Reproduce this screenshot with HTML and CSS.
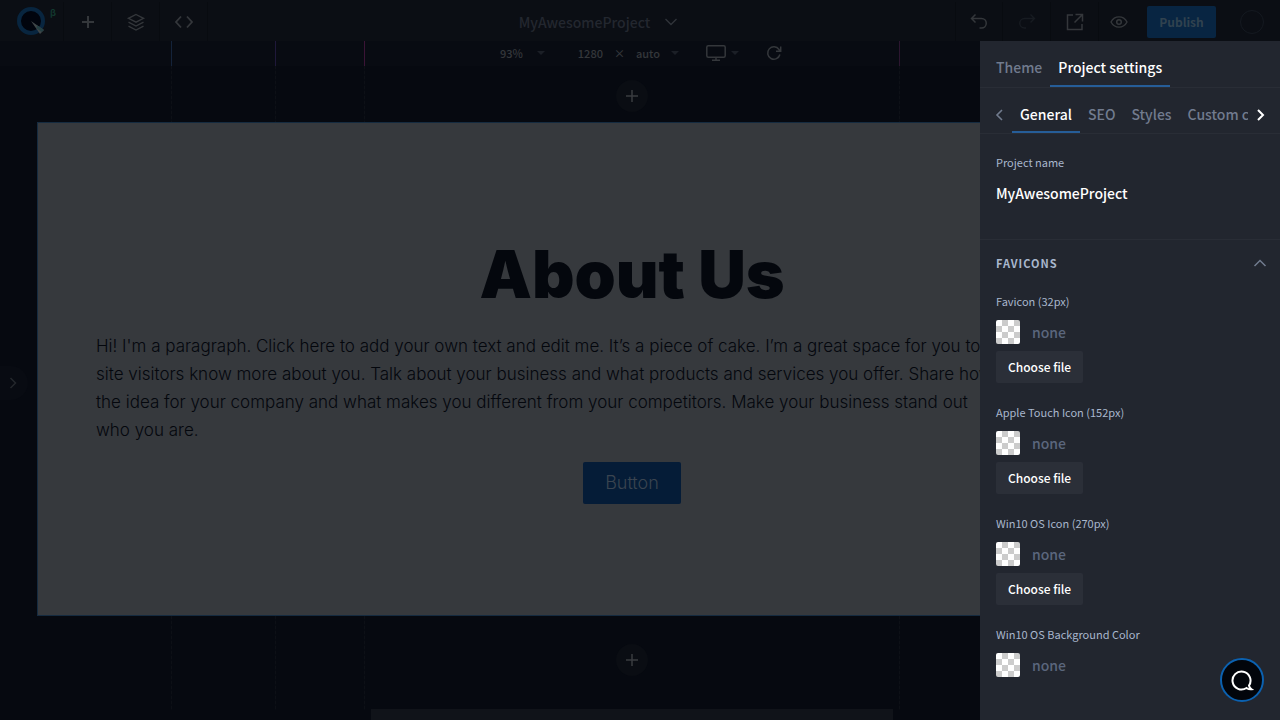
FILE: index.html
```html
<!DOCTYPE html>
<html lang="en">
<head>
<meta charset="utf-8">
<meta name="viewport" content="width=device-width, initial-scale=1">
<title>MyAwesomeProject</title>
<link rel="stylesheet" href="styles.css">
</head>
<body>
<div class="app">
  <header class="topbar">
    <div class="tools">
      <a class="logo" href="#" aria-label="Home">
        <svg width="30" height="30" viewBox="0 0 30 30"><circle cx="14" cy="14" r="12" fill="#01040d" stroke="#08253f" stroke-width="4"/><path d="M14 14L27 23L23 27Z" fill="#404648" stroke="none"/><path d="M27 23L24.500 25L19.500 21L20 18.200Z" fill="#243f43" stroke="none"/></svg>
        <span class="beta">β</span>
      </a>
      <button class="tool" aria-label="Add"><svg width="24" height="24" viewBox="0 0 24 24"><path d="M12 6v12M6 12h12" stroke-width="2"/></svg></button>
      <button class="tool" aria-label="Layers"><svg width="24" height="24" viewBox="0 0 24 24"><path d="M12 4.500L19.500 8.300L12 12.100L4.500 8.300ZM4.500 12.200L12 16L19.500 12.200M4.500 16.200L12 20L19.500 16.200" stroke-width="1.400"/></svg></button>
      <button class="tool" aria-label="Code"><svg width="24" height="24" viewBox="0 0 24 24"><path d="M9 6.500L4 12L9 17.500M15 6.500L20 12L15 17.500" stroke-width="1.800"/></svg></button>
    </div>
    <button class="project">MyAwesomeProject
      <svg width="14" height="14" viewBox="0 0 14 14"><path d="M1.500 4L7 9.500L12.500 4" stroke-width="1.400"/></svg>
    </button>
    <div class="tools">
      <button class="tool line-left" aria-label="Undo"><svg width="24" height="24" viewBox="0 0 24 24"><path d="M8.500 4.500L4.500 8.500L8.500 12.500M4.500 8.500H14.500A4.500 4.500 0 0 1 14.500 18H12.500" stroke-width="1.500"/></svg></button>
      <button class="tool off" aria-label="Redo" disabled><svg width="24" height="24" viewBox="0 0 24 24"><path d="M15.500 4.500L19.500 8.500L15.500 12.500M19.500 8.500H9.500A4.500 4.500 0 0 0 9.500 18H11" stroke-width="1.400"/></svg></button>
      <button class="tool" aria-label="Export"><svg width="24" height="24" viewBox="0 0 24 24"><path d="M10 5H4.500V19.500H19V14M12.500 4.500H19.500V11.500M19 5L11.500 12.500" stroke-width="1.500"/></svg></button>
      <button class="tool plain" aria-label="Preview"><svg width="24" height="24" viewBox="0 0 24 24"><path d="M4 12C7.500 5.200 16.500 5.200 20 12C16.500 18.800 7.500 18.800 4 12Z" stroke-width="1.400"/><circle cx="12" cy="12" r="2.300" stroke-width="1.500"/></svg></button>
      <button class="publish">Publish</button>
      <button class="avatar" aria-label="Account"></button>
    </div>
  </header>

  <div class="ruler">
    <button class="size zoom">93% <i class="caret"></i></button>
    <span class="size dims"><span>1280</span><span>×</span><span>auto</span><i class="caret"></i></span>
    <button class="size device" aria-label="Device"><svg width="20" height="18" viewBox="0 0 20 18"><rect x=".8" y="1.800" width="18.400" height="11.400" rx="1.500" stroke-width="1.500"/><path d="M10 13v3M6 16.200h8" stroke-width="1.500"/></svg><i class="caret"></i></button>
    <button class="size" aria-label="Reload"><svg width="16" height="16" viewBox="0 0 16 16"><path d="M13.900 9.500A6.200 6.200 0 1 1 13 4.500L14.500 6M14.700 1.500V6.200H10" stroke-width="1.500"/></svg></button>
  </div>

  <main class="canvas">
    <i class="guide guide-blue"></i><i class="guide guide-violet"></i><i class="guide guide-pink"></i><i class="guide guide-plum"></i>
    <div class="add-row"><button class="add" aria-label="Add section above"><svg width="12" height="12" viewBox="0 0 12 12"><path d="M6 0v12M0 6h12" stroke-width="1.500"/></svg></button></div>
    <section class="section">
      <h1>About Us</h1>
      <p>Hi! I'm a paragraph. Click here to add your own text and edit me. It’s a piece of cake. I’m a great space for you to<br>site visitors know more about you. Talk about your business and what products and services you offer. Share how<br>the idea for your company and what makes you different from your competitors. Make your business stand out<br>who you are.</p>
      <button class="cta">Button</button>
    </section>
    <div class="add-row below"><button class="add" aria-label="Add section below"><svg width="12" height="12" viewBox="0 0 12 12"><path d="M6 0v12M0 6h12" stroke-width="1.500"/></svg></button></div>
    <div class="dock"></div>
    <button class="drawer" aria-label="Open drawer"><svg width="12" height="12" viewBox="0 0 12 12"><path d="M3.500 1L8.500 6L3.500 11" stroke-width="1.500"/></svg></button>
  </main>

  <aside class="panel">
    <nav class="tabs main-tabs">
      <button class="tab">Theme</button>
      <button class="tab active">Project settings</button>
    </nav>
    <nav class="tabs">
      <button class="arrow" aria-label="Previous tabs"><svg width="12" height="12" viewBox="0 0 12 12"><path d="M8 1L3 6L8 11" stroke-width="1.600"/></svg></button>
      <div class="tab-list">
        <button class="tab active">General</button>
        <button class="tab">SEO</button>
        <button class="tab">Styles</button>
        <button class="tab">Custom code</button>
      </div>
      <button class="arrow next" aria-label="Next tabs"><svg width="12" height="12" viewBox="0 0 12 12"><path d="M4 1L9 6L4 11" stroke-width="2"/></svg></button>
    </nav>
    <div class="name-block">
      <label class="label" for="name">Project name</label>
      <input class="name" id="name" type="text" value="MyAwesomeProject">
    </div>
    <div class="icons-block">
      <button class="heading">FAVICONS <svg width="14" height="14" viewBox="0 0 14 14"><path d="M1.500 10L7 4.500L12.500 10" stroke-width="1.500"/></svg></button>
      <div class="field">
        <span class="label">Favicon (32px)</span>
        <div class="value"><i class="swatch"></i><span>none</span></div>
        <button class="choose">Choose file</button>
      </div>
      <div class="field">
        <span class="label">Apple Touch Icon (152px)</span>
        <div class="value"><i class="swatch"></i><span>none</span></div>
        <button class="choose">Choose file</button>
      </div>
      <div class="field">
        <span class="label">Win10 OS Icon (270px)</span>
        <div class="value"><i class="swatch"></i><span>none</span></div>
        <button class="choose">Choose file</button>
      </div>
      <div class="field">
        <label class="label" for="tile">Win10 OS Background Color</label>
        <div class="value"><i class="swatch"></i><input class="color" id="tile" type="text" value="none"></div>
      </div>
    </div>
  </aside>
  <button class="chat" aria-label="Chat"><svg width="24" height="24" viewBox="0 0 24 24"><path d="M19 17.500A9 9 0 1 0 16.500 20C18 21 20 21.500 21.500 21.300C20 20.300 19.200 19 19 17.500Z" stroke-width="2"/></svg></button>
</div>
</body>
</html>
```
FILE: styles.css
```css
* { box-sizing: border-box; }
body {
  margin: 0;
  background: #060910;
  color: #303338;
  font: 500 14px/20px "Noto Sans CJK SC", "Open Sans", sans-serif;
}
button, input {
  margin: 0;
  padding: 0;
  border: 0;
  background: none;
  color: inherit;
  font: inherit;
}
svg { display: block; fill: none; stroke: currentColor; }
.app {
  position: relative;
  display: flex;
  flex-direction: column;
  height: 100vh;
  overflow: hidden;
}

/* Top bar */
.topbar {
  display: flex;
  align-items: stretch;
  height: 41px;
  flex: none;
  padding-top: 2px;
  background: #0b0e14;
}
.tools { display: flex; align-items: stretch; }
.logo {
  display: flex;
  width: 64px;
  padding: 5px 0 0 17px;
  gap: 3px;
  border-right: 1px solid #080b10;
  text-decoration: none;
}
.beta { color: #12382f; font-size: 9px; font-weight: 700; line-height: 12px; }
.tool {
  display: flex;
  align-items: center;
  justify-content: center;
  width: 48px;
  border-right: 1px solid #080b10;
  color: #34373b;
}
.line-left { border-left: 1px solid #080b10; }
.off { color: #171b21; }
.plain { width: 40px; border: 0; }
.project {
  display: flex;
  flex: 1;
  align-items: center;
  justify-content: center;
  gap: 14px;
  padding-left: 34px;
  color: #23272f;
}
.project svg { color: #30343a; }
.publish {
  align-self: center;
  width: 69px;
  height: 32px;
  margin-left: 8px;
  border-radius: 2px;
  background: #082542;
  color: #30424f;
  font-size: 12px;
  font-weight: 700;
}
.avatar {
  align-self: center;
  width: 24px;
  height: 24px;
  margin: 0 16px 0 24px;
  border: 1px solid #141920;
  border-radius: 50%;
}

/* Ruler */
.ruler {
  display: flex;
  flex: none;
  align-items: center;
  justify-content: center;
  height: 25px;
  padding: 0 0 2px 2px;
  background: #080b12;
  color: #34373b;
  font-size: 11px;
  line-height: 16px;
}
.size { display: flex; align-items: center; }
.zoom { gap: 14px; margin-right: 33px; }
.dims { gap: 11px; margin-right: 27px; }
.device { gap: 5px; margin-right: 27px; }
.caret {
  border: 4px solid transparent;
  border-top-color: #1b1f26;
  border-bottom: 0;
}

/* Canvas */
.canvas {
  position: relative;
  display: flex;
  flex: 1;
  flex-direction: column;
  padding: 0 53px 0 37px;
}
.guide {
  position: absolute;
  top: -25px;
  bottom: 10px;
  width: 1px;
  background: repeating-linear-gradient(#0d1016 0 3px, #080b12 3px 5px);
}
.guide::before {
  content: "";
  display: block;
  height: 25px;
  background: currentColor;
}
.guide-blue { left: 171px; color: #14233a; }
.guide-violet { left: 275px; color: #1f183a; }
.guide-pink { left: 364px; color: #3b1436; }
.guide-plum { left: 899px; color: #2c1630; }
.add-row { display: flex; flex: none; justify-content: center; padding: 14px 0 10px; }
.below { padding: 28px 0 33px; }
.add {
  display: flex;
  align-items: center;
  justify-content: center;
  width: 32px;
  height: 32px;
  border-radius: 50%;
  background: #0a0d13;
  color: #3a3c40;
}
.section {
  position: relative;
  flex: none;
  padding: 111px 58px;
  border: 1px solid #152b40;
  background: #36393d;
  color: #04070d;
  font: 300 17px/28px Inter, "Liberation Sans", sans-serif;
  text-align: center;
}
h1 {
  margin: 0;
  font-size: 66px;
  font-weight: 900;
  line-height: 80px;
}
p { margin: 18px 0; text-align: left; white-space: nowrap; }
.cta {
  display: block;
  width: 98px;
  height: 42px;
  margin: 0 auto;
  border-radius: 2px;
  background: #051c37;
  color: #3a4450;
  font-size: 18px;
}
.dock {
  align-self: center;
  flex: 1;
  width: 522px;
  background: #101319;
}
.drawer {
  position: absolute;
  top: 300px;
  left: 0;
  width: 28px;
  height: 34px;
  padding-left: 7px;
  border-radius: 0 17px 17px 0;
  background: #080b12;
  color: #24272c;
}

/* Settings panel */
.panel {
  position: absolute;
  top: 41px;
  right: 0;
  bottom: 0;
  width: 300px;
  overflow: hidden;
  background: #22262f;
  color: #fff;
}
.tabs {
  display: flex;
  height: 46px;
  border-bottom: 1px solid #292d36;
}
.main-tabs { height: 47px; padding-left: 8px; }
.tab-list { display: flex; flex: 1; min-width: 0; overflow: hidden; }
.tab {
  flex: none;
  padding: 8px 8px 0;
  border-bottom: 2px solid transparent;
  color: #717b8e;
}
.active { border-color: #265d98; color: #fff; }
.arrow {
  display: flex;
  flex: none;
  align-items: center;
  justify-content: center;
  width: 32px;
  padding: 8px 0 0 8px;
  color: #717b8e;
}
.next { padding: 8px 8px 0 0; color: #fff; }
.name-block {
  display: flex;
  flex-direction: column;
  gap: 13px;
  padding: 20px 16px 36px;
  border-bottom: 1px solid #292d36;
}
.label {
  display: block;
  color: #a9b7cd;
  font-size: 11px;
  font-weight: 400;
  line-height: 16px;
}
.name { width: 100%; height: 20px; }
.icons-block { padding: 13px 16px 0; }
.heading {
  display: flex;
  align-items: center;
  justify-content: space-between;
  width: 100%;
  margin-bottom: 20px;
  color: #a9b7cd;
  font-size: 11px;
  font-weight: 700;
  letter-spacing: 1px;
}
.heading svg { color: #717b8e; margin-right: -3px; }
.field { margin-bottom: 21px; }
.value {
  display: flex;
  align-items: center;
  gap: 12px;
  margin: 11px 0 7px;
  color: #5b667d;
}
.color { width: 120px; height: 20px; }
.swatch {
  width: 24px;
  height: 24px;
  border-radius: 2px;
  background: repeating-conic-gradient(#ccc 0 25%, #fff 0 50%) 0 0 / 12px 12px;
}
.choose {
  height: 32px;
  padding: 0 12px;
  border-radius: 2px;
  background: #2b2f38;
  font-size: 12px;
}
.chat {
  position: absolute;
  right: 16px;
  bottom: 18px;
  display: flex;
  align-items: center;
  justify-content: center;
  width: 44px;
  height: 44px;
  border: 2px solid #0b61b0;
  border-radius: 50%;
  background: #02050b;
  color: #fff;
}
```
